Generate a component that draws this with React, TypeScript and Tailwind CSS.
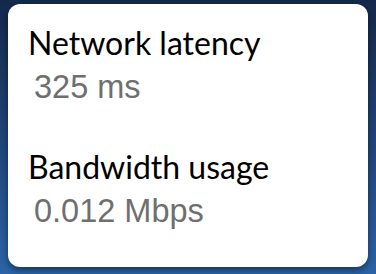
export default function App() {
  const stats = [
    { label: "Network latency", value: "325 ms" },
    { label: "Bandwidth usage", value: "0.012 Mbps" },
  ];

  return (
    <div className="h-[274px] w-[376px] bg-gradient-to-b from-[#14284a] to-[#2b63a6] px-2 pt-1">
      <div className="flex h-[263px] flex-col gap-[44px] rounded-xl bg-white px-[20px] pt-[21px] shadow-[0_3px_6px_rgba(0,0,0,0.45)]">
        {stats.map((stat) => (
          <div key={stat.label} className="flex flex-col gap-[8px]">
            <span className="font-['Lato',sans-serif] text-[32px] leading-[36px] text-black">
              {stat.label}
            </span>
            <span className="pl-[6px] font-['Liberation_Sans',Arial,sans-serif] text-[32.5px] leading-[36px] text-[#6f6f6f]">
              {stat.value}
            </span>
          </div>
        ))}
      </div>
    </div>
  );
}
